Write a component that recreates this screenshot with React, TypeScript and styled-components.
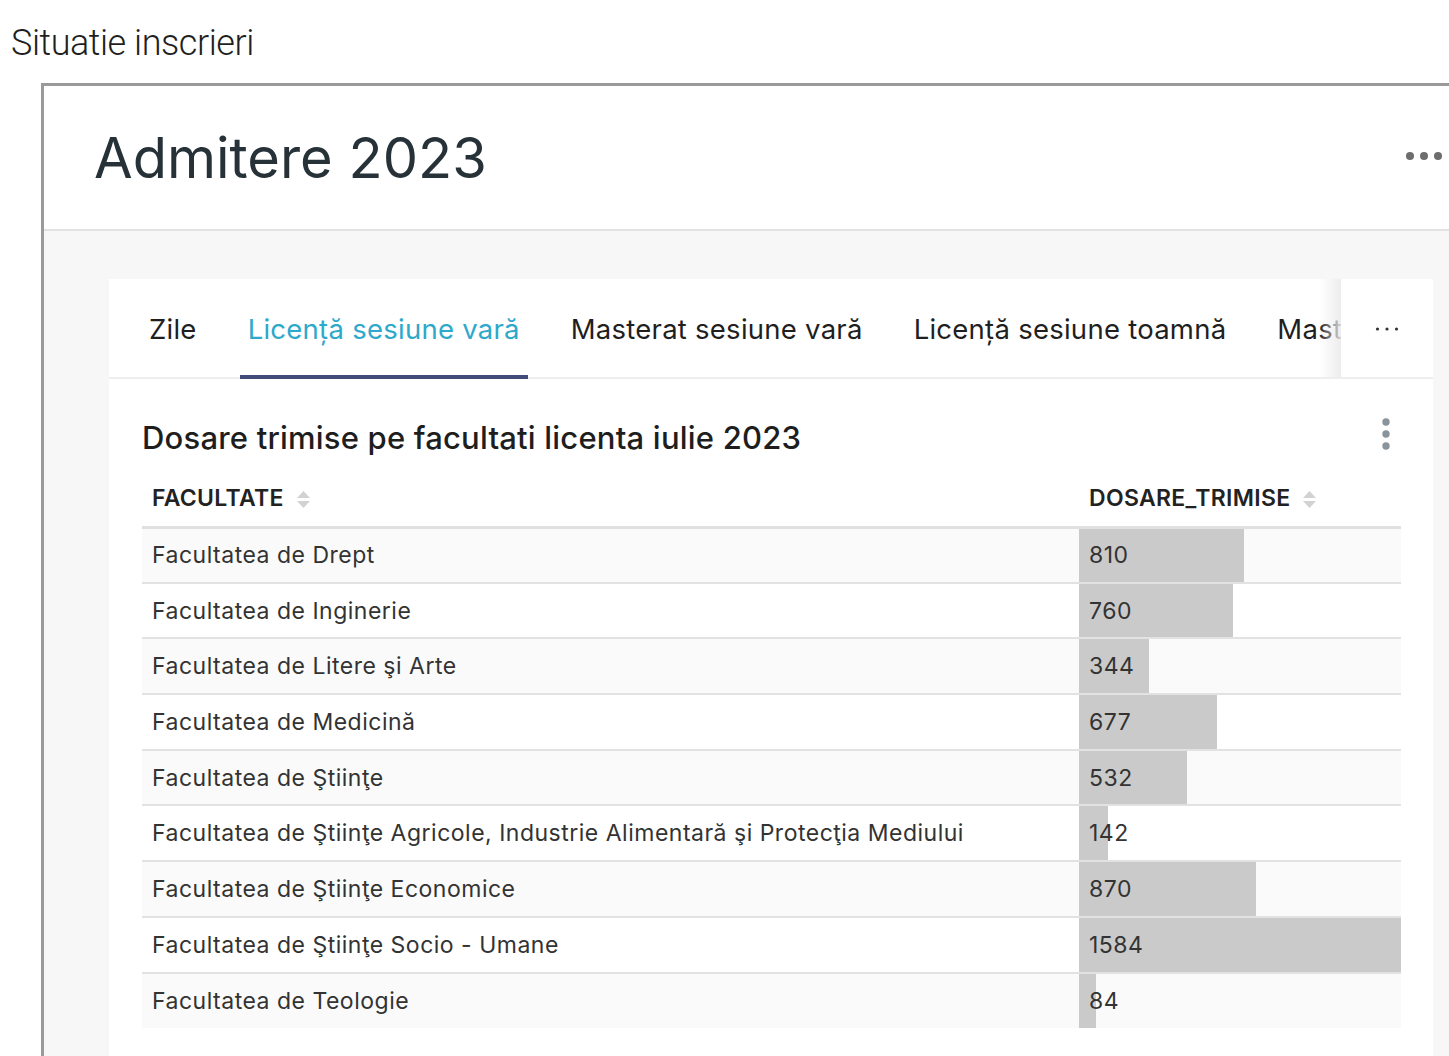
import { createGlobalStyle, styled } from 'styled-components';

const GlobalStyle = createGlobalStyle`
  html, body {
    margin: 0;
    padding: 0;
    background: #ffffff;
    font-family: Inter, "Noto Sans", sans-serif;
    overflow: hidden;
  }
  * {
    box-sizing: border-box;
  }
`;

const PageTitle = styled.h1`
  margin: 0;
  height: 83px;
  padding: 22px 0 0 11px;
  font-family: Roboto, "Liberation Sans", sans-serif;
  font-weight: 300;
  font-size: 36px;
  line-height: 42px;
  letter-spacing: -0.45px;
  color: #1f1f1f;
`;

const Frame = styled.div`
  margin-left: 41px;
  border-left: 3px solid #9a9a9a;
  border-top: 3px solid #9a9a9a;
  height: 973px;
  display: flex;
  flex-direction: column;
`;

const DashHeader = styled.div`
  height: 145px;
  flex-shrink: 0;
  display: flex;
  align-items: center;
  justify-content: space-between;
  padding: 0 6px 0 50px;
  background: #ffffff;
  border-bottom: 2px solid #e2e2e2;
`;

const DashTitle = styled.div`
  font-size: 56px;
  font-weight: 400;
  color: #263238;
`;

const DashMenu = styled.svg`
  width: 38px;
  height: 10px;
  margin-top: -4px;
`;

const Canvas = styled.div`
  flex: 1;
  background: #f7f7f7;
  padding: 48px 16px 0 65px;
  overflow: hidden;
`;

const Card = styled.div`
  background: #ffffff;
  height: 100%;
`;

const TabBar = styled.div`
  display: flex;
  height: 100px;
  box-shadow: inset 0 -2px 0 #eeeeee;
`;

const TabScroller = styled.div`
  flex: 1;
  display: flex;
  gap: 35px;
  padding-left: 32px;
  overflow: hidden;
  white-space: nowrap;
`;

const Tab = styled.div<{ $active?: boolean }>`
  flex-shrink: 0;
  display: flex;
  align-items: center;
  padding: 0 8px;
  font-size: 27.5px;
  letter-spacing: 0.25px;
  color: ${(p) => (p.$active ? '#2ea8cb' : '#1f1f1f')};
  box-shadow: ${(p) => (p.$active ? 'inset 0 -4px 0 #424c79' : 'none')};
`;

const MoreTabs = styled.div`
  position: relative;
  width: 92px;
  flex-shrink: 0;
  display: flex;
  align-items: center;
  justify-content: center;
  background: #ffffff;
  box-shadow: inset 0 -2px 0 #eeeeee;

  &::before {
    content: '';
    position: absolute;
    left: -22px;
    top: 0;
    bottom: 2px;
    width: 22px;
    background: linear-gradient(to right, rgba(255, 255, 255, 0), rgba(235, 235, 235, 0.9));
  }
`;

const ChartBody = styled.div`
  padding: 36px 32px 0 33px;
`;

const ChartHead = styled.div`
  display: flex;
  align-items: center;
  justify-content: space-between;
  height: 44px;
  margin-bottom: 12px;
`;

const ChartTitle = styled.div`
  font-size: 31px;
  font-weight: 500;
  color: #1e1e1e;
  letter-spacing: 0.2px;
`;

const Kebab = styled.svg`
  width: 10px;
  height: 34px;
  margin-right: 10px;
  margin-top: -6px;
`;

const Table = styled.table`
  width: 100%;
  border-collapse: collapse;
  table-layout: fixed;
`;

const HeadCell = styled.th<{ $w?: number }>`
  width: ${(p) => (p.$w ? `${p.$w}px` : 'auto')};
  height: 56px;
  padding: 0 10px;
  text-align: left;
  vertical-align: middle;
  font-size: 23px;
  font-weight: 600;
  letter-spacing: 0.3px;
  color: #222222;
  border-bottom: 3px solid #e0e0e0;
  white-space: nowrap;
`;

const SortIcon = styled.svg`
  width: 13px;
  height: 17px;
  margin-left: 13px;
  vertical-align: -2px;
`;

const Row = styled.tr<{ $odd: boolean }>`
  background: ${(p) => (p.$odd ? '#fafafa' : '#ffffff')};
  border-bottom: 2px solid #e2e2e2;

  &:last-child {
    border-bottom: none;
  }
`;

const Cell = styled.td`
  height: 55.7px;
  padding: 0 10px;
  font-size: 23px;
  color: #333333;
  letter-spacing: 0.5px;
  white-space: nowrap;
`;

const tabs = [
  'Zile',
  'Licență sesiune vară',
  'Masterat sesiune vară',
  'Licență sesiune toamnă',
  'Masterat sesiune toamnă',
];

const rows: [string, number][] = [
  ['Facultatea de Drept', 810],
  ['Facultatea de Inginerie', 760],
  ['Facultatea de Litere şi Arte', 344],
  ['Facultatea de Medicină', 677],
  ['Facultatea de Ştiinţe', 532],
  ['Facultatea de Ştiinţe Agricole, Industrie Alimentară şi Protecţia Mediului', 142],
  ['Facultatea de Ştiinţe Economice', 870],
  ['Facultatea de Ştiinţe Socio - Umane', 1584],
  ['Facultatea de Teologie', 84],
];

const maxValue = Math.max(...rows.map((r) => r[1]));

const Sort = () => (
  <SortIcon viewBox="0 0 13 17">
    <path d="M6.5 0 L13 7 H0 Z" fill="#d2d2d2" />
    <path d="M6.5 17 L13 10 H0 Z" fill="#d2d2d2" />
  </SortIcon>
);

export default function App() {
  return (
    <>
      <GlobalStyle />
      <PageTitle>Situatie inscrieri</PageTitle>
      <Frame>
        <DashHeader>
          <DashTitle>Admitere 2023</DashTitle>
          <DashMenu viewBox="0 0 38 10">
            <circle cx="5" cy="5" r="4" fill="#6d6d6d" />
            <circle cx="19" cy="5" r="4" fill="#6d6d6d" />
            <circle cx="33" cy="5" r="4" fill="#6d6d6d" />
          </DashMenu>
        </DashHeader>
        <Canvas>
          <Card>
            <TabBar>
              <TabScroller>
                {tabs.map((t, i) => (
                  <Tab key={t} $active={i === 1}>
                    {t}
                  </Tab>
                ))}
              </TabScroller>
              <MoreTabs>
                <svg width="24" height="6" viewBox="0 0 24 6">
                  <circle cx="2.5" cy="3" r="1.6" fill="#333" />
                  <circle cx="12" cy="3" r="1.6" fill="#333" />
                  <circle cx="21.5" cy="3" r="1.6" fill="#333" />
                </svg>
              </MoreTabs>
            </TabBar>
            <ChartBody>
              <ChartHead>
                <ChartTitle>Dosare trimise pe facultati licenta iulie 2023</ChartTitle>
                <Kebab viewBox="0 0 10 34">
                  <circle cx="5" cy="5" r="3.7" fill="#8a949c" />
                  <circle cx="5" cy="17" r="3.7" fill="#8a949c" />
                  <circle cx="5" cy="29" r="3.7" fill="#8a949c" />
                </Kebab>
              </ChartHead>
              <Table>
                <thead>
                  <tr>
                    <HeadCell>
                      FACULTATE
                      <Sort />
                    </HeadCell>
                    <HeadCell $w={322}>
                      DOSARE_TRIMISE
                      <Sort />
                    </HeadCell>
                  </tr>
                </thead>
                <tbody>
                  {rows.map(([name, value], i) => {
                    const pct = (value / maxValue) * 100;
                    return (
                      <Row key={name} $odd={i % 2 === 0}>
                        <Cell>{name}</Cell>
                        <Cell
                          style={{
                            background: `linear-gradient(to right, #cacaca ${pct}%, transparent ${pct}%)`,
                          }}
                        >
                          {value}
                        </Cell>
                      </Row>
                    );
                  })}
                </tbody>
              </Table>
            </ChartBody>
          </Card>
        </Canvas>
      </Frame>
    </>
  );
}
